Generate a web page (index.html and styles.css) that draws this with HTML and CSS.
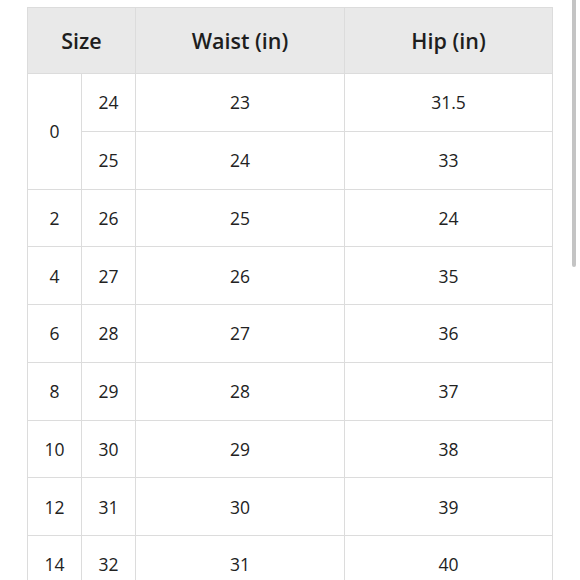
FILE: index.html
```html
<!DOCTYPE html>
<html>
<head>
<meta charset="utf-8">
<link rel="stylesheet" href="styles.css">
</head>
<body>
<div class="page">
  <table class="size-table">
    <colgroup>
      <col class="c-size">
      <col class="c-size">
      <col class="c-waist">
      <col class="c-hip">
    </colgroup>
    <thead>
      <tr><th colspan="2">Size</th><th>Waist (in)</th><th>Hip (in)</th></tr>
    </thead>
    <tbody>
      <tr><td rowspan="2">0</td><td>24</td><td>23</td><td>31.5</td></tr>
      <tr><td>25</td><td>24</td><td>33</td></tr>
      <tr><td>2</td><td>26</td><td>25</td><td>24</td></tr>
      <tr><td>4</td><td>27</td><td>26</td><td>35</td></tr>
      <tr><td>6</td><td>28</td><td>27</td><td>36</td></tr>
      <tr><td>8</td><td>29</td><td>28</td><td>37</td></tr>
      <tr><td>10</td><td>30</td><td>29</td><td>38</td></tr>
      <tr><td>12</td><td>31</td><td>30</td><td>39</td></tr>
      <tr><td>14</td><td>32</td><td>31</td><td>40</td></tr>
    </tbody>
  </table>
  <div class="scroll-thumb"></div>
</div>
</body>
</html>
```
FILE: styles.css
```css
html, body {
  margin: 0;
  padding: 0;
  background: #ffffff;
  overflow: hidden;
  height: 580px;
}
.page {
  position: relative;
  width: 580px;
  height: 580px;
  padding: 7px 0 0 27px;
  box-sizing: border-box;
  font-family: "Open Sans", "Liberation Sans", sans-serif;
}
.size-table {
  border-collapse: collapse;
  table-layout: fixed;
  width: 525px;
  color: #222222;
}
.c-size { width: 54px; }
.c-waist { width: 209px; }
.c-hip { width: 208px; }
.size-table th,
.size-table td {
  border: 1px solid #dcdcdc;
  text-align: center;
  vertical-align: middle;
  padding: 0;
}
.size-table th {
  background: #e9e9e9;
  height: 65px;
  font-size: 21.5px;
  font-weight: 600;
  color: #1e1e1e;
}
.size-table td {
  height: 56.75px;
  font-size: 17.5px;
  font-weight: 400;
}
.scroll-thumb {
  position: absolute;
  top: 0;
  right: 4px;
  width: 4px;
  height: 267px;
  background: #c4c4c4;
  border-radius: 0 0 2px 2px;
}
```
